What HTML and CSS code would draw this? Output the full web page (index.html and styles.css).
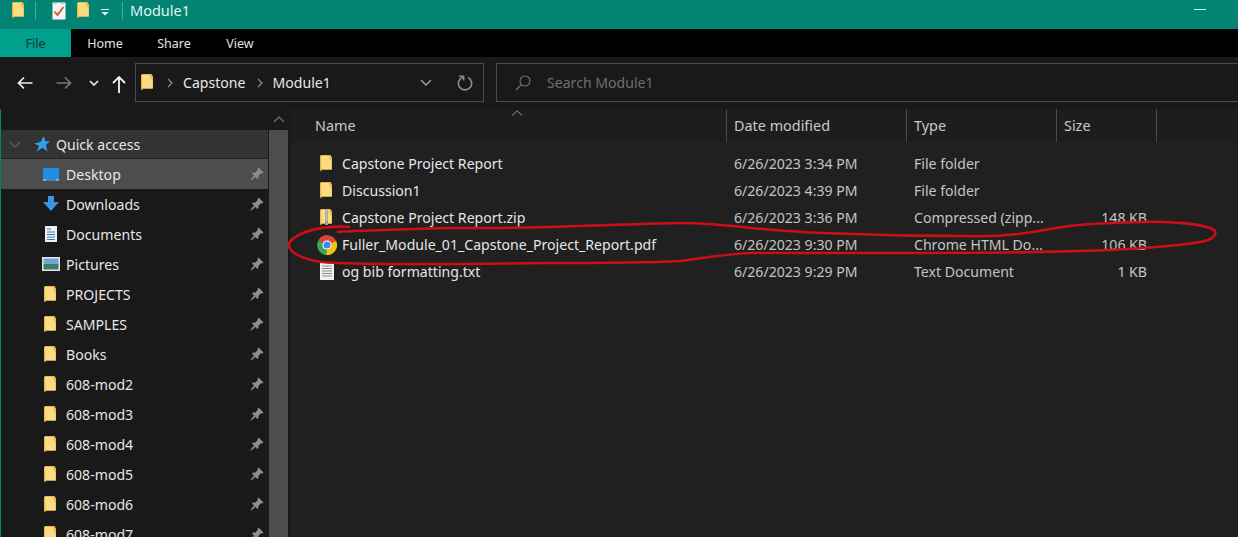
FILE: index.html
```html
<!DOCTYPE html>
<html lang="en">
<head>
    <meta charset="UTF-8">
    <meta name="viewport" content="width=device-width, initial-scale=1.0">
    <title>Module1</title>
    <link rel="stylesheet" href="styles.css">
</head>
<body>

<svg class="defs" width="0" height="0">
    <symbol id="folder" viewBox="0 0 12 17">
        <path d="M1 0H10.5L12 2.5V14.5H2L1 16.5L0 15V1Z" fill="#e9b94e"/>
        <path d="M1 1H8.5L10 4L11.5 7.5V14.5H1.5Z" fill="#fbdc82"/>
    </symbol>
    <symbol id="pin" viewBox="0 0 14 14">
        <path d="M8.5 0.5L13.5 5.5L12.3 6.5L11 6.2L8.3 8.9L8.5 11L7.4 12L2 6.6L3 5.5L5.1 5.7L7.8 3L7.5 1.7Z" fill="#8b8f94"/>
        <path d="M4 8.6L5.4 10L1.2 13.6L0.5 12.9Z" fill="#8b8f94"/>
    </symbol>
</svg>

<div class="titlebar">
    <svg class="qa-folder"><use href="#folder"/></svg>
    <span class="title-sep"></span>
    <svg class="qa-check" viewBox="0 0 14 18">
        <path d="M0.5 0.5H13.5V17.5H0.5Z" fill="#f4f4f4"/>
        <path d="M2 0H5V2H2ZM9 0H12V2H9Z" fill="#bdbdbd"/>
        <path d="M2.5 9.5L5.5 13L11.5 5" fill="none" stroke="#d9542c" stroke-width="1.8"/>
    </svg>
    <svg class="qa-folder qa-folder-two"><use href="#folder"/></svg>
    <svg class="qa-drop" viewBox="0 0 8 7">
        <path d="M0 0H8V1H0ZM0.5 3H7.5L4 6.5Z" fill="#f2f2f2"/>
    </svg>
    <span class="title-sep title-sep-two"></span>
    <span class="window-title">Module1</span>
    <span class="minimize"></span>
</div>

<div class="tabs">
    <a class="tab tab-file">File</a>
    <a class="tab tab-home">Home</a>
    <a class="tab tab-share">Share</a>
    <a class="tab tab-view">View</a>
</div>

<div class="addressbar">
    <svg class="nav-btn nav-back" viewBox="0 0 16 14">
        <path d="M15.5 7H1.5M7 1.5L1.5 7L7 12.5" fill="none" stroke="#f0f0f0" stroke-width="1.7"/>
    </svg>
    <svg class="nav-btn nav-forward" viewBox="0 0 16 14">
        <path d="M0.5 7H14.5M9 1.5L14.5 7L9 12.5" fill="none" stroke="#777" stroke-width="1.7"/>
    </svg>
    <svg class="nav-drop" viewBox="0 0 10 6">
        <path d="M1 1L5 5L9 1" fill="none" stroke="#e8e8e8" stroke-width="1.7"/>
    </svg>
    <svg class="nav-up" viewBox="0 0 14 18">
        <path d="M7 18V2M1 8L7 2L13 8" fill="none" stroke="#f4f4f4" stroke-width="1.8"/>
    </svg>
    <div class="path-box">
        <svg class="path-folder"><use href="#folder"/></svg>
        <svg class="crumb-arrow" viewBox="0 0 6 10"><path d="M1 1L5 5L1 9" fill="none" stroke="#8a8a8a" stroke-width="1.3"/></svg>
        <span class="crumb">Capstone</span>
        <svg class="crumb-arrow crumb-arrow-two" viewBox="0 0 6 10"><path d="M1 1L5 5L1 9" fill="none" stroke="#8a8a8a" stroke-width="1.3"/></svg>
        <span class="crumb">Module1</span>
        <svg class="path-drop" viewBox="0 0 12 7"><path d="M1 1L6 6L11 1" fill="none" stroke="#9a9a9a" stroke-width="1.5"/></svg>
        <svg class="refresh" viewBox="0 0 16 16">
            <path d="M5.5 2.2A6.6 6.6 0 1 0 11 2.4" fill="none" stroke="#8e8e8e" stroke-width="1.6"/>
            <path d="M2.2 1.2H6.6V5.6" fill="none" stroke="#8e8e8e" stroke-width="1.6"/>
        </svg>
    </div>
    <div class="search-box">
        <svg class="search-icon" viewBox="0 0 16 16">
            <circle cx="10" cy="6" r="5" fill="none" stroke="#777" stroke-width="1.1"/>
            <path d="M6.3 9.7L1 15" stroke="#777" stroke-width="1.2"/>
        </svg>
        <span class="search-text">Search Module1</span>
    </div>
</div>

<div class="main">
    <div class="sidebar">
        <div class="tree">
            <div class="tree-row tree-quick">
                <svg class="tree-chevron" viewBox="0 0 12 7"><path d="M1 1L6 6L11 1" fill="none" stroke="#5c5c5c" stroke-width="1.4"/></svg>
                <svg class="star" viewBox="0 0 16 16"><path d="M10 0L11.2 5.2H16L12 8.8L13.4 15.5L8.5 11.7L2.8 15.5L5 9.8L0 7.5L6.5 6Z" fill="#2f9fea"/></svg>
                <span>Quick access</span>
            </div>
            <div class="tree-row tree-active">
                <svg class="tree-icon" viewBox="0 0 18 14"><path d="M1 1H17V12.5H1Z" fill="#1e8fe8"/><path d="M1 12.5H17V13.5H1Z" fill="#e9f2fa"/><path d="M4 12.5H14V13.5H4Z" fill="#0e5da6"/></svg>
                <span>Desktop</span>
                <svg class="pin"><use href="#pin"/></svg>
            </div>
            <div class="tree-row">
                <svg class="tree-icon" viewBox="0 0 18 16"><path d="M6 0H12V6H17L9 15L1 6H6Z" fill="#3d94e6"/></svg>
                <span>Downloads</span>
                <svg class="pin"><use href="#pin"/></svg>
            </div>
            <div class="tree-row">
                <svg class="tree-icon" viewBox="0 0 18 16"><path d="M3 0H15V16H3Z" fill="#eef1f4"/><path d="M5 3H9M5 6H13M5 8.5H13M5 11H13M5 13.5H13" stroke="#3f78b0"/></svg>
                <span>Documents</span>
                <svg class="pin"><use href="#pin"/></svg>
            </div>
            <div class="tree-row">
                <svg class="tree-icon" viewBox="0 0 18 14"><path d="M0 0H18V14H0Z" fill="#e4e8ec"/><path d="M1.5 1.5H16.5V7H1.5Z" fill="#6ba7dc"/><path d="M1.5 7H16.5V12.5H1.5Z" fill="#3f7d5e"/></svg>
                <span>Pictures</span>
                <svg class="pin"><use href="#pin"/></svg>
            </div>
            <div class="tree-row"><svg class="tree-icon tree-folder"><use href="#folder"/></svg><span>PROJECTS</span><svg class="pin"><use href="#pin"/></svg></div>
            <div class="tree-row"><svg class="tree-icon tree-folder"><use href="#folder"/></svg><span>SAMPLES</span><svg class="pin"><use href="#pin"/></svg></div>
            <div class="tree-row"><svg class="tree-icon tree-folder"><use href="#folder"/></svg><span>Books</span><svg class="pin"><use href="#pin"/></svg></div>
            <div class="tree-row"><svg class="tree-icon tree-folder"><use href="#folder"/></svg><span>608-mod2</span><svg class="pin"><use href="#pin"/></svg></div>
            <div class="tree-row"><svg class="tree-icon tree-folder"><use href="#folder"/></svg><span>608-mod3</span><svg class="pin"><use href="#pin"/></svg></div>
            <div class="tree-row"><svg class="tree-icon tree-folder"><use href="#folder"/></svg><span>608-mod4</span><svg class="pin"><use href="#pin"/></svg></div>
            <div class="tree-row"><svg class="tree-icon tree-folder"><use href="#folder"/></svg><span>608-mod5</span><svg class="pin"><use href="#pin"/></svg></div>
            <div class="tree-row"><svg class="tree-icon tree-folder"><use href="#folder"/></svg><span>608-mod6</span><svg class="pin"><use href="#pin"/></svg></div>
            <div class="tree-row"><svg class="tree-icon tree-folder"><use href="#folder"/></svg><span>608-mod7</span><svg class="pin"><use href="#pin"/></svg></div>
        </div>
        <div class="scrollbar">
            <svg class="scroll-up" viewBox="0 0 12 7"><path d="M1 6L6 1L11 6" fill="none" stroke="#6a6a6a" stroke-width="1.3"/></svg>
            <div class="scroll-thumb"></div>
        </div>
    </div>

    <div class="files">
        <div class="file-head">
            <div class="col-head col-name">Name</div>
            <div class="col-head">Date modified</div>
            <div class="col-head">Type</div>
            <div class="col-head">Size</div>
            <svg class="sort-arrow" viewBox="0 0 12 6"><path d="M1 5.5L6 0.8L11 5.5" fill="none" stroke="#9a9a9a"/></svg>
        </div>

        <div class="file-row">
            <div class="cell-name"><svg class="file-icon"><use href="#folder"/></svg>Capstone Project Report</div>
            <div class="cell">6/26/2023 3:34 PM</div>
            <div class="cell">File folder</div>
            <div class="cell cell-size"></div>
        </div>
        <div class="file-row">
            <div class="cell-name"><svg class="file-icon"><use href="#folder"/></svg>Discussion1</div>
            <div class="cell">6/26/2023 4:39 PM</div>
            <div class="cell">File folder</div>
            <div class="cell cell-size"></div>
        </div>
        <div class="file-row">
            <div class="cell-name">
                <svg class="file-icon" viewBox="0 0 12 17">
                    <use href="#folder"/>
                    <path d="M5 0H8V16H5Z" fill="#9a9a8e"/>
                    <path d="M5.5 1H7.5M5.5 3H7.5M5.5 5H7.5M5.5 7H7.5M5.5 9H7.5M5.5 11H7.5" stroke="#e6e6dc"/>
                </svg>
                Capstone Project Report.zip
            </div>
            <div class="cell">6/26/2023 3:36 PM</div>
            <div class="cell">Compressed (zipp...</div>
            <div class="cell cell-size">148 KB</div>
        </div>
        <div class="file-row">
            <div class="cell-name">
                <svg class="file-icon file-icon-chrome" viewBox="0 0 20 20">
                    <path d="M10 10L1.5 5A10 10 0 0 1 19.2 6Z" fill="#dc4437"/>
                    <path d="M10 10L19.2 6A10 10 0 0 1 9 20Z" fill="#f4c20d"/>
                    <path d="M10 10L9 20A10 10 0 0 1 1.5 5Z" fill="#3aa757"/>
                    <circle cx="10" cy="10" r="4.6" fill="#fff"/>
                    <circle cx="10" cy="10" r="3.6" fill="#4285f4"/>
                </svg>
                Fuller_Module_01_Capstone_Project_Report.pdf
            </div>
            <div class="cell">6/26/2023 9:30 PM</div>
            <div class="cell">Chrome HTML Do...</div>
            <div class="cell cell-size">106 KB</div>
        </div>
        <div class="file-row">
            <div class="cell-name">
                <svg class="file-icon file-icon-text" viewBox="0 0 14 17">
                    <path d="M0 0H14V17H0Z" fill="#f1f1f1"/>
                    <path d="M2 3H12M2 5.5H12M2 8H12M2 10.5H12M2 13H12" stroke="#8d8d8d"/>
                </svg>
                og bib formatting.txt
            </div>
            <div class="cell">6/26/2023 9:29 PM</div>
            <div class="cell">Text Document</div>
            <div class="cell cell-size">1 KB</div>
        </div>
    </div>
</div>

<!-- red pen circle drawn over the pdf row -->
<svg class="scribble" viewBox="0 0 1238 537">
    <path d="M350 227C322 225 296 232 289 243C287 254 310 263 337 263C400 265 480 264 547 263C590 263 640 263 680 261C705 258 725 254 751 253C800 253 850 253 893 253C945 253 990 253 1036 252C1075 251 1110 251 1143 248C1170 246 1200 243 1208 240C1215 237 1217 233 1214 230C1205 224 1170 221 1143 222C1105 223 1075 224 1050 229C1020 235 990 237 965 236C915 236 870 235 822 233C795 232 775 230 751 228C725 225 700 223 680 223C630 224 590 226 547 227C510 228 480 228 447 228C410 229 370 230 337 232" fill="none" stroke="#cc0f17" stroke-width="2.6"/>
</svg>

</body>
</html>
```

FILE: styles.css
```css
html, body {
    margin: 0;
    padding: 0;
    height: 537px;
    overflow: hidden;
}
body {
    position: relative;
    background-color: #191919;
    color: #e6e6e6;
    font-family: "Noto Sans", "Open Sans", sans-serif;
    font-size: 14.1px;
}
.defs {
    display: none;
}

/* title bar */
.titlebar {
    display: flex;
    align-items: flex-start;
    height: 29px;
    box-sizing: border-box;
    background-color: #038373;
    padding-left: 12px;
    padding-top: 2px;
}
.qa-folder {
    width: 12px;
    height: 17px;
}
.title-sep {
    width: 1px;
    height: 18px;
    background-color: #4aa79b;
    margin-left: 11px;
}
.qa-check {
    width: 14px;
    height: 18px;
    margin-left: 16px;
}
.qa-folder-two {
    margin-left: 11px;
}
.qa-drop {
    width: 8px;
    height: 7px;
    margin-left: 12px;
    margin-top: 7px;
}
.title-sep-two {
    margin-left: 13px;
}
.window-title {
    margin-left: 7px;
    margin-top: -2px;
    color: #dff5f1;
    font-size: 14.5px;
}
.minimize {
    width: 12px;
    height: 1px;
    background-color: #e6fff9;
    margin-left: auto;
    margin-right: 32px;
    margin-top: 7px;
}

/* ribbon tabs */
.tabs {
    display: flex;
    height: 28px;
    background-color: #000;
    font-size: 12.5px;
}
.tab {
    display: flex;
    align-items: center;
    justify-content: center;
    color: #e2e2e2;
}
.tab-file {
    width: 71px;
    background-color: #00a08d;
    color: #0b3b35;
}
.tab-home {
    width: 68px;
}
.tab-share {
    width: 70px;
}
.tab-view {
    width: 62px;
}

/* address row */
.addressbar {
    display: flex;
    align-items: flex-start;
    height: 52px;
    box-sizing: border-box;
    padding-top: 6px;
}
.nav-btn {
    width: 16px;
    height: 14px;
    margin-top: 13px;
}
.nav-back {
    margin-left: 17px;
}
.nav-forward {
    margin-left: 23px;
}
.nav-drop {
    width: 10px;
    height: 6px;
    margin-left: 17px;
    margin-top: 17px;
}
.nav-up {
    width: 14px;
    height: 18px;
    margin-left: 13px;
    margin-top: 12px;
}
.path-box {
    display: flex;
    align-items: center;
    width: 349px;
    height: 39px;
    box-sizing: border-box;
    margin-left: 9px;
    padding-left: 5px;
    border: 1px solid #4a4a4a;
}
.path-folder {
    width: 12px;
    height: 17px;
}
.crumb-arrow {
    width: 6px;
    height: 10px;
    margin-left: 14px;
    margin-right: 10px;
}
.crumb-arrow-two {
    margin-left: 11px;
}
.crumb {
    color: #e8e8e8;
}
.path-drop {
    width: 12px;
    height: 7px;
    margin-left: auto;
}
.refresh {
    width: 16px;
    height: 16px;
    margin-left: 25px;
    margin-right: 10px;
}
.search-box {
    display: flex;
    align-items: center;
    flex: 1;
    height: 39px;
    box-sizing: border-box;
    margin-left: 12px;
    margin-right: -2px;
    padding-left: 18px;
    border: 1px solid #4a4a4a;
}
.search-icon {
    width: 16px;
    height: 16px;
}
.search-text {
    margin-left: 16px;
    color: #6f6f6f;
}

/* sidebar + file list */
.main {
    display: flex;
    height: 428px;
    overflow: hidden;
}
.sidebar {
    display: flex;
    width: 291px;
    border-left: 1px solid #038373;
    box-sizing: border-box;
}
.tree {
    width: 267px;
    padding-top: 21px;
    box-sizing: border-box;
}
.tree-row {
    display: flex;
    align-items: center;
    height: 30px;
    padding-left: 41px;
    color: #e6e6e6;
}
.tree-quick {
    height: 29px;
    padding-left: 8px;
    background-color: #333;
    border-bottom: 1px solid #222;
    box-sizing: border-box;
}
.tree-active {
    background-color: #4d4d4d;
}
.tree-chevron {
    width: 12px;
    height: 7px;
}
.star {
    width: 16px;
    height: 16px;
    margin-left: 13px;
    margin-right: 6px;
}
.tree-icon {
    width: 18px;
    height: 16px;
    margin-right: 6px;
    flex-shrink: 0;
}
.tree-folder {
    width: 12px;
    height: 17px;
    margin-left: 2px;
    margin-right: 10px;
}
.pin {
    width: 14px;
    height: 14px;
    margin-left: auto;
    margin-right: 4px;
}
.scrollbar {
    display: flex;
    flex-direction: column;
    align-items: center;
    width: 20px;
    padding-top: 7px;
    padding-left: 1px;
    box-sizing: border-box;
}
.scroll-up {
    width: 12px;
    height: 7px;
    margin-bottom: 7px;
    flex-shrink: 0;
}
.scroll-thumb {
    width: 100%;
    flex: 1;
    background-color: #4d4d4d;
}
.files {
    position: relative;
    flex: 1;
    background-color: #202020;
}
.file-head {
    display: grid;
    grid-template-columns: 436px 180px 150px 100px;
    height: 33px;
    margin-bottom: 8px;
    background-color: #1d1d1d;
}
.col-head {
    display: flex;
    align-items: center;
    padding-left: 7px;
    border-right: 1px solid #4a4a4a;
    color: #c9c9c9;
    font-size: 14.4px;
}
.col-name {
    padding-left: 24px;
}
.sort-arrow {
    position: absolute;
    left: 220px;
    top: 1px;
    width: 12px;
    height: 6px;
}
.file-row {
    display: grid;
    grid-template-columns: 435px 180px 150px 91px;
    height: 27px;
    align-items: center;
}
.cell-name {
    display: flex;
    align-items: center;
    padding-left: 29px;
    color: #e6e6e6;
}
.cell {
    padding-left: 8px;
    color: #c4c4c4;
}
.cell-size {
    text-align: right;
}
.file-icon {
    width: 12px;
    height: 17px;
    margin-right: 10px;
    flex-shrink: 0;
}
.file-icon-chrome {
    width: 20px;
    height: 20px;
    margin-left: -3px;
    margin-right: 5px;
}
.file-icon-text {
    width: 14px;
    margin-right: 8px;
}

/* annotation lies over the page */
.scribble {
    position: absolute;
    left: 0;
    top: 0;
    width: 1238px;
    height: 537px;
    pointer-events: none;
}
```
